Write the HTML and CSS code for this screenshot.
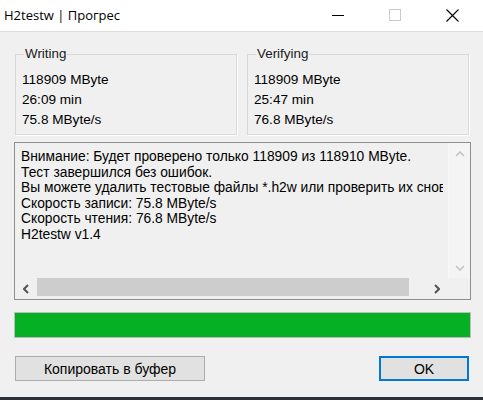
FILE: index.html
```html
<!DOCTYPE html>
<html lang="ru">
<head>
<meta charset="utf-8">
<title>H2testw | Прогрес</title>
<link rel="stylesheet" href="styles.css">
</head>
<body>
<div class="window">
  <header class="titlebar">
    <span class="title">H2testw | Прогрес</span>
    <div class="controls">
      <span class="ctl"><svg width="13" height="13" viewBox="0 0 13 13"><line x1="0" y1="6.5" x2="12" y2="6.5" stroke="#000" stroke-width="1"/></svg></span>
      <span class="ctl"><svg width="13" height="13" viewBox="0 0 13 13"><rect x="0.5" y="0.5" width="11" height="11" fill="none" stroke="#cccccc" stroke-width="1"/></svg></span>
      <span class="ctl"><svg width="13" height="13" viewBox="0 0 13 13"><path d="M0.5 0.5 L12.5 12.5 M12.5 0.5 L0.5 12.5" stroke="#000" stroke-width="1.1" fill="none"/></svg></span>
    </div>
  </header>
  <main class="client">
    <div class="groups">
      <fieldset class="group">
        <legend>Writing</legend>
        <div class="val">118909 MByte</div>
        <div class="val">26:09 min</div>
        <div class="val">75.8 MByte/s</div>
      </fieldset>
      <fieldset class="group">
        <legend>Verifying</legend>
        <div class="val">118909 MByte</div>
        <div class="val">25:47 min</div>
        <div class="val">76.8 MByte/s</div>
      </fieldset>
    </div>
    <div class="log">
      <div class="log-body">
        <div class="log-text">
          <div>Внимание: Будет проверено только 118909 из 118910 MByte.</div>
          <div>Тест завершился без ошибок.</div>
          <div>Вы можете удалить тестовые файлы *.h2w или проверить их снова позже.</div>
          <div>Скорость записи: 75.8 MByte/s</div>
          <div>Скорость чтения: 76.8 MByte/s</div>
          <div>H2testw v1.4</div>
        </div>
        <div class="vscroll">
          <span class="sbtn"><svg width="10" height="6" viewBox="0 0 10 6"><polyline points="1,5 5,1 9,5" fill="none" stroke="#c2c2c2" stroke-width="1.5"/></svg></span>
          <span class="vtrack"></span>
          <span class="sbtn"><svg width="10" height="6" viewBox="0 0 10 6"><polyline points="1,1 5,5 9,1" fill="none" stroke="#c2c2c2" stroke-width="1.5"/></svg></span>
        </div>
      </div>
      <div class="hscroll">
        <span class="hbtn"><svg width="6" height="10" viewBox="0 0 6 10"><polyline points="5,1 1,5 5,9" fill="none" stroke="#555" stroke-width="2"/></svg></span>
        <span class="thumb"></span>
        <span class="htrack"></span>
        <span class="hbtn"><svg width="6" height="10" viewBox="0 0 6 10"><polyline points="1,1 5,5 1,9" fill="none" stroke="#555" stroke-width="2"/></svg></span>
        <span class="corner"></span>
      </div>
    </div>
    <div class="progress"><div class="fill" style="width:100%"></div></div>
    <div class="buttons">
      <button class="btn copy">Копировать в буфер</button>
      <button class="btn ok">OK</button>
    </div>
  </main>
  <div class="taskbar"></div>
</div>
</body>
</html>
```

FILE: styles.css
```css
* { box-sizing: border-box; }
html, body { margin: 0; padding: 0; }
body {
  width: 483px;
  height: 400px;
  overflow: hidden;
  background: #f0f0f0;
  font-family: "Liberation Sans", Arial, sans-serif;
  font-size: 13.6px;
  color: #000;
}
.window {
  display: flex;
  flex-direction: column;
  height: 400px;
}
.titlebar {
  height: 32px;
  flex: none;
  background: #fff;
  border-bottom: 1px solid #dcdcdc;
  display: flex;
  align-items: center;
  justify-content: space-between;
  padding-left: 4px;
}
.title {
  font-family: "Open Sans", "Noto Sans", sans-serif;
  font-size: 13px;
  color: #000;
  padding-bottom: 1px;
}
.controls {
  display: flex;
  margin-right: 2px;
  height: 100%;
}
.ctl {
  width: 57px;
  display: flex;
  align-items: center;
  justify-content: center;
}
.ctl svg { display: block; }
.client {
  flex: 1;
  display: flex;
  flex-direction: column;
}
.groups {
  display: flex;
  gap: 10px;
  margin-top: 14px;
  padding-left: 15px;
}
.group {
  width: 222px;
  margin: 0;
  padding: 8px 0 4px 6px;
  border: 1px solid #d9d9d9;
  box-shadow: 1px 1px 0 #fdfdfd;
  min-inline-size: 0;
}
.group legend {
  font-size: 13.4px;
  line-height: 16px;
  padding: 0 1px;
  margin-left: 2px;
  color: #1a1a1a;
}
.val {
  font-size: 13.6px;
  line-height: 20px;
  white-space: nowrap;
}
.log {
  margin: 7px 0 0 14px;
  width: 457px;
  height: 158px;
  border: 1px solid #8f8f8f;
  display: flex;
  flex-direction: column;
  background: #f0f0f0;
}
.log-body {
  flex: 1;
  display: flex;
  min-height: 0;
}
.log-text {
  flex: 1;
  min-width: 0;
  overflow: hidden;
  margin-right: 5px;
  padding: 6px 0 0 6px;
  font-size: 13.8px;
  line-height: 15.6px;
  white-space: nowrap;
}
.vscroll {
  width: 22px;
  display: flex;
  flex-direction: column;
  background: #f4f4f4;
  border-left: 1px solid #f8f8f8;
}
.sbtn {
  height: 21px;
  display: flex;
  align-items: center;
  justify-content: center;
}
.sbtn svg, .hbtn svg { display: block; }
.vtrack { flex: 1; }
.hscroll {
  height: 21px;
  display: flex;
  background: #f0f0f0;
}
.hbtn {
  width: 22px;
  display: flex;
  align-items: center;
  justify-content: center;
}
.thumb {
  width: 372px;
  height: 18px;
  background: #cdcdcd;
}
.htrack { flex: 1; }
.corner {
  width: 22px;
  background: #f0f0f0;
}
.progress {
  margin: 12px 0 0 14px;
  width: 457px;
  height: 26px;
  border: 1px solid #bcbcbc;
  background: #e6e6e6;
}
.fill {
  height: 100%;
  background: #06b025;
}
.buttons {
  display: flex;
  justify-content: space-between;
  margin-top: 18px;
  padding: 0 14px 0 15px;
}
.btn {
  height: 25px;
  font-family: "Liberation Sans", Arial, sans-serif;
  font-size: 14px;
  color: #000;
  background: #e1e1e1;
  border: 1px solid #adadad;
  padding: 0;
  margin: 0;
}
.copy { width: 190px; }
.ok {
  width: 90px;
  border: 2px solid #0078d7;
}
.taskbar {
  height: 3px;
  flex: none;
  background: #2e3236;
}
```
